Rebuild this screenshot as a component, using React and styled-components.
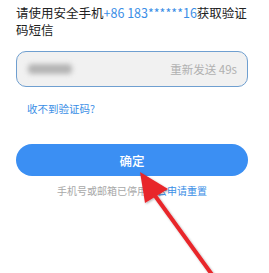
import React from 'react';
import styled, { createGlobalStyle } from 'styled-components';

const GlobalStyle = createGlobalStyle`
  html, body {
    margin: 0;
    padding: 0;
    background: #fff;
  }
  body {
    font-family: "Noto Sans CJK SC", "Noto Sans", sans-serif;
  }
`;

const Page = styled.div`
  position: relative;
  width: 269px;
  height: 273px;
  overflow: hidden;
  padding: 4px 21px 0 16px;
  box-sizing: border-box;
`;

const Title = styled.div`
  font-size: 12.5px;
  line-height: 17px;
  color: #222;
`;

const Phone = styled.span`
  color: #3a8ee6;
`;

const CodeField = styled.div`
  margin-top: 13px;
  height: 36px;
  box-sizing: border-box;
  border: 1px solid #6f9fd0;
  border-radius: 10px;
  background: #f1f1f1;
  display: flex;
  align-items: center;
  justify-content: space-between;
  padding: 0 10px 0 11px;
`;

const BlurredCode = styled.div`
  width: 44px;
  height: 10px;
  border-radius: 4px;
  background: #b4b4b4;
  filter: blur(2.5px);
`;

const Resend = styled.span`
  font-size: 11.5px;
  color: #b0b0b0;
`;

const HelpLink = styled.div`
  margin-top: 14px;
  padding-left: 11px;
  font-size: 10.5px;
  color: #3a8ee6;
`;

const Confirm = styled.button`
  display: block;
  width: 100%;
  margin-top: 28px;
  height: 32px;
  border: none;
  border-radius: 16px;
  background: #3b8ff3;
  color: #fff;
  font-family: inherit;
  font-size: 12.5px;
  font-weight: 500;
`;

const Footer = styled.div`
  margin-top: 7px;
  text-align: center;
  font-size: 10px;
  color: #a8a8a8;
`;

const FooterLink = styled.span`
  color: #3a8ee6;
`;

const Pointer = styled.svg`
  position: absolute;
  left: 0;
  top: 0;
  pointer-events: none;
`;

export default function App() {
  return (
    <>
      <GlobalStyle />
      <Page>
        <Title>
          请使用安全手机<Phone>+86 183******16</Phone>获取验证码短信
        </Title>
        <CodeField>
          <BlurredCode />
          <Resend>重新发送 49s</Resend>
        </CodeField>
        <HelpLink>收不到验证码?</HelpLink>
        <Confirm>确定</Confirm>
        <Footer>
          手机号或邮箱已停用，<FooterLink>去申请重置</FooterLink>
        </Footer>
        <Pointer width="269" height="273" viewBox="0 0 269 273">
          <defs>
            <filter id="sh" x="-20%" y="-20%" width="140%" height="140%">
              <feDropShadow dx="1" dy="1" stdDeviation="1.2" floodColor="#000" floodOpacity="0.3" />
            </filter>
          </defs>
          <g filter="url(#sh)">
            <line x1="153" y1="193" x2="213" y2="276" stroke="#e8262b" strokeWidth="4" strokeLinecap="round" />
            <polygon points="140,172 168,189 145,203" fill="#e8262b" />
          </g>
        </Pointer>
      </Page>
    </>
  );
}
